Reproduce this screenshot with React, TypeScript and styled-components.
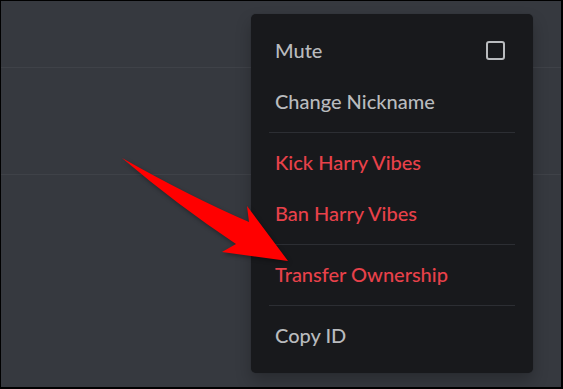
import styled, { createGlobalStyle } from 'styled-components';

const GlobalStyle = createGlobalStyle`
  html, body {
    margin: 0;
    padding: 0;
    background: #000;
  }
  * {
    box-sizing: border-box;
  }
`;

const Page = styled.div`
  position: relative;
  width: 563px;
  height: 389px;
  overflow: hidden;
  background-color: #36393f;
  border-style: solid;
  border-color: #000;
  border-width: 1px 2px 2px 1px;
  font-family: Lato, 'Open Sans', sans-serif;
`;

const Backdrop = styled.div`
  display: flex;
  flex-direction: column;
`;

const BackdropRow = styled.div<{ $height: number }>`
  height: ${props => props.$height}px;
  border-bottom: 1px solid #3f4248;
`;

const Menu = styled.div`
  position: absolute;
  left: 250px;
  top: 13px;
  width: 282px;
  padding: 11px 18px 12px;
  background-color: #18191c;
  border-radius: 5px;
  box-shadow: 0 8px 16px rgba(0, 0, 0, 0.24), 0 0 1px rgba(0, 0, 0, 0.3);
`;

const Item = styled.div<{ $danger?: boolean }>`
  display: flex;
  align-items: center;
  justify-content: space-between;
  height: 51px;
  padding: 0 10px 1px 6px;
  font-size: 20px;
  font-weight: 500;
  color: ${props => (props.$danger ? '#e8414a' : '#b9bbbe')};
`;

const Separator = styled.div`
  height: 1px;
  margin: 4.5px 0;
  background-color: #2c2e33;
`;

const Checkbox = styled.span`
  width: 19px;
  height: 19px;
  border: 2px solid #b9bbbe;
  border-radius: 3px;
`;

const Arrow = styled.svg`
  position: absolute;
  left: 0;
  top: 0;
  filter: drop-shadow(1px 2px 2px rgba(0, 0, 0, 0.35));
`;

function App() {
  return (
    <Page>
      <GlobalStyle />
      <Backdrop>
        <BackdropRow $height={67} />
        <BackdropRow $height={107} />
      </Backdrop>
      <Menu>
        <Item>
          Mute
          <Checkbox />
        </Item>
        <Item>Change Nickname</Item>
        <Separator />
        <Item $danger>Kick Harry Vibes</Item>
        <Item $danger>Ban Harry Vibes</Item>
        <Separator />
        <Item $danger>Transfer Ownership</Item>
        <Separator />
        <Item>Copy ID</Item>
      </Menu>
      <Arrow width='563' height='389' viewBox='0 0 563 389'>
        <path
          d='M121 157 Q190 196 248 221 L246 205 L287 260 L221 251 L235 243 Q175 203 121 157 Z'
          fill='#ff0000'
        />
      </Arrow>
    </Page>
  );
}

export default App;
